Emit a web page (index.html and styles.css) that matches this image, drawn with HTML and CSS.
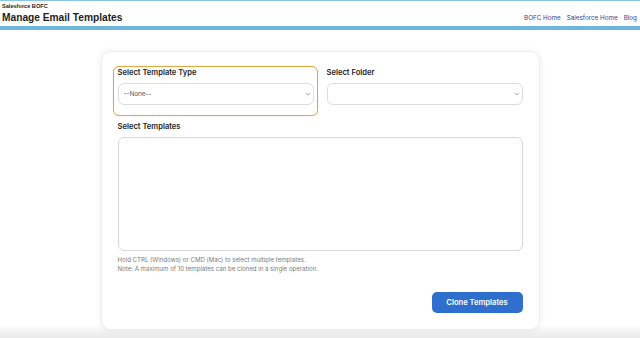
FILE: index.html
```html
<!DOCTYPE html>
<html lang="en">
<head>
    <meta charset="UTF-8">
    <meta name="viewport" content="width=device-width, initial-scale=1.0">
    <title>Manage Email Templates</title>
    <link rel="stylesheet" href="styles.css">
</head>
<body>

    <header class="site-header">
        <div class="brand">
            <div class="app-name">Salesforce BOFC</div>
            <h1>Manage Email Templates</h1>
        </div>
        <nav class="nav-links">
            <a href="#">BOFC Home</a>
            <a href="#">Salesforce Home</a>
            <a href="#">Blog</a>
        </nav>
    </header>
    <div class="header-bar"></div>

    <main class="page">
        <div class="card">
            <div class="row">
                <div class="form-group highlight">
                    <label for="templateType">Select Template Type</label>
                    <div class="select-wrap">
                        <select id="templateType">
                            <option>--None--</option>
                        </select>
                        <svg class="chevron" width="6" height="4" viewBox="0 0 6 4"><path d="M0.8 1 L3 3 L5.2 1" fill="none" stroke="#8a8a8a" stroke-width="0.7"/></svg>
                    </div>
                </div>
                <div class="form-group">
                    <label for="folder">Select Folder</label>
                    <div class="select-wrap">
                        <select id="folder">
                            <option></option>
                        </select>
                        <svg class="chevron" width="6" height="4" viewBox="0 0 6 4"><path d="M0.8 1 L3 3 L5.2 1" fill="none" stroke="#8a8a8a" stroke-width="0.7"/></svg>
                    </div>
                </div>
            </div>

            <div class="form-group templates">
                <label for="templates">Select Templates</label>
                <select id="templates" multiple></select>
                <p class="help">Hold CTRL (Windows) or CMD (Mac) to select multiple templates.<br>Note: A maximum of 10 templates can be cloned in a single operation.</p>
            </div>

            <div class="actions">
                <button type="button">Clone Templates</button>
            </div>
        </div>
    </main>

</body>
</html>
```

FILE: styles.css
```css
html, body {
    height: 100%;
}
body {
    margin: 0;
    font-family: Inter, "Noto Sans", sans-serif;
    color: #1e1e1e;
    background: linear-gradient(to bottom, #fff calc(100% - 14px), #e9e9e9);
    border-top: 1px solid #8cc4e4;
    box-sizing: border-box;
}
.site-header {
    display: flex;
    justify-content: space-between;
    align-items: flex-end;
    padding: 2px 3px 2px 2px;
    font-family: "Liberation Sans", Arial, sans-serif;
}
.app-name {
    font-size: 5.6px;
    font-weight: bold;
    line-height: 7px;
}
.site-header h1 {
    margin: 2px 0 0;
    font-size: 10.2px;
    line-height: 12px;
}
.nav-links {
    display: flex;
    gap: 6px;
    padding-bottom: 2px;
}
.nav-links a {
    font-family: Inter, sans-serif;
    font-size: 6.3px;
    color: #3b3b8f;
    text-decoration: none;
}
.header-bar {
    height: 4px;
    background-color: #6fb6de;
}
.page {
    padding-top: 21px;
}
.card {
    width: 439px;
    margin: 0 auto;
    box-sizing: border-box;
    background-color: #fff;
    border-radius: 10px;
    box-shadow: 0 0 6px rgba(0, 0, 0, 0.08);
    border: 1px solid #efefef;
    padding: 14px 16px 16px 16px;
}
.row {
    display: flex;
    gap: 13px;
}
.row .form-group {
    flex: 1 1 0;
    min-width: 0;
}
.form-group label {
    display: block;
    font-size: 7.6px;
    font-weight: 600;
    line-height: 10px;
    margin-bottom: 5px;
}
.row .form-group {
    padding-top: 2px;
}
.row .highlight {
    box-sizing: border-box;
    margin: 0 -4px 0 -5px;
    padding: 1px 3px 10px 4px;
    border: 1px solid #dba944;
    border-radius: 6px;
    box-shadow: 0 0 1px rgba(219, 169, 68, 0.6);
}
.select-wrap {
    position: relative;
}
.select-wrap select {
    display: block;
    width: 100%;
    height: 22px;
    box-sizing: border-box;
    appearance: none;
    border: 1px solid #dcdcdc;
    border-radius: 6px;
    background-color: #fff;
    font-family: Inter, sans-serif;
    font-size: 6.4px;
    color: #555;
    padding: 0 5px;
}
.chevron {
    position: absolute;
    right: 3px;
    top: 9px;
}
.templates {
    margin-top: 6px;
}
.templates select {
    display: block;
    width: 100%;
    height: 114px;
    box-sizing: border-box;
    border: 1px solid #d8d8d8;
    border-radius: 6px;
    background-color: #fff;
}
.help {
    margin: 4px 0 0;
    font-size: 6.1px;
    line-height: 9px;
    color: #7a7a7a;
}
.actions {
    display: flex;
    justify-content: flex-end;
    margin-top: 19px;
}
.actions button {
    width: 91px;
    height: 21px;
    background-color: #2e6fce;
    color: #fff;
    border: none;
    border-radius: 5px;
    font-family: Inter, sans-serif;
    font-size: 7.6px;
    font-weight: 600;
    cursor: pointer;
}
```
